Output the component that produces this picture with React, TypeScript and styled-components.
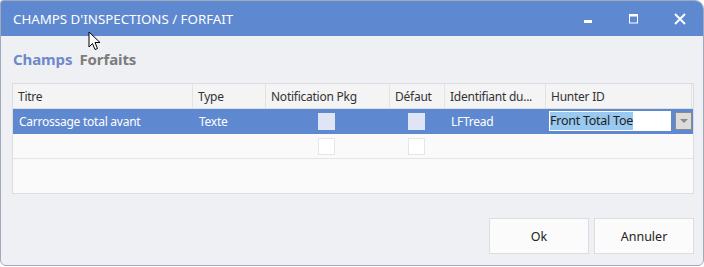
import styled, { createGlobalStyle } from 'styled-components';

const GlobalStyle = createGlobalStyle`
  body {
    margin: 0;
    background: #ffffff;
    font-family: 'Noto Sans', 'Open Sans', sans-serif;
  }
`;

const Window = styled.div`
  position: relative;
  box-sizing: border-box;
  width: 704px;
  height: 266px;
  display: flex;
  flex-direction: column;
  background: #eff0f4;
  border: 1px solid #9fabba;
  border-radius: 3px 9px 6px 6px;
  overflow: hidden;
`;

const TitleBar = styled.div`
  height: 35px;
  display: flex;
  align-items: center;
  justify-content: space-between;
  background: #5e88cf;
  color: #ffffff;
  padding-left: 12px;
`;

const Title = styled.div`
  font-size: 13.3px;
`;

const Controls = styled.div`
  display: flex;
  height: 100%;
`;

const ControlButton = styled.div`
  width: 46px;
  height: 100%;
  display: flex;
  align-items: center;
  justify-content: center;
`;

const Body = styled.div`
  flex: 1;
  display: flex;
  flex-direction: column;
  padding: 10px 9px 10px 11px;
`;

const Tabs = styled.div`
  display: flex;
  gap: 7px;
  height: 26px;
  align-items: center;
  margin-left: 1px;
`;

const Tab = styled.div<{ $active?: boolean }>`
  font-size: 15px;
  font-weight: 700;
  color: ${(p) => (p.$active ? '#6d89c9' : '#7c7c7c')};
  letter-spacing: -0.1px;
`;

const Table = styled.div`
  margin-top: 11px;
  box-sizing: border-box;
  width: 682px;
  height: 111px;
  border: 1px solid #dcdde0;
  background: #fafafa;
  font-size: 12px;
  letter-spacing: -0.25px;
`;

const cols = '180px 73px 124px 55px 101px 146px';

const HeaderRow = styled.div`
  display: grid;
  grid-template-columns: ${cols};
  height: 24px;
  background: #f4f4f4;
  border-bottom: 1px solid #dedfe1;
  color: #333333;
`;

const HeaderCell = styled.div`
  display: flex;
  align-items: center;
  padding-left: 5px;
  border-right: 1px solid #e2e3e5;
  white-space: nowrap;
  overflow: hidden;
`;

const Row = styled.div<{ $selected?: boolean }>`
  display: grid;
  grid-template-columns: ${cols};
  height: 24px;
  background: ${(p) => (p.$selected ? '#5e88cf' : '#fafafa')};
  color: ${(p) => (p.$selected ? '#ffffff' : '#333333')};
  border-bottom: 1px solid ${(p) => (p.$selected ? '#5e88cf' : '#e4e5e7')};
`;

const Cell = styled.div<{ $center?: boolean }>`
  display: flex;
  align-items: center;
  justify-content: ${(p) => (p.$center ? 'center' : 'flex-start')};
  padding-left: ${(p) => (p.$center ? '0' : '6px')};
  padding-right: ${(p) => (p.$center ? '3px' : '0')};
  white-space: nowrap;
`;

const CheckBox = styled.div<{ $selected?: boolean }>`
  box-sizing: border-box;
  width: 17px;
  height: 17px;
  background: ${(p) => (p.$selected ? '#dfe5f4' : '#ffffff')};
  border: 1px solid ${(p) => (p.$selected ? '#dfe5f4' : '#e6e6e6')};
`;

const ComboCell = styled.div`
  display: flex;
  align-items: center;
  gap: 4px;
  padding-left: 3px;
`;

const ComboInput = styled.div`
  width: 122px;
  height: 20px;
  background: #ffffff;
  display: flex;
  align-items: center;
  padding-left: 1px;
  color: #1e1e1e;
  font-size: 12.5px;
`;

const Highlight = styled.span`
  background: #99c9ef;
  line-height: 18px;
`;

const ComboButton = styled.div`
  box-sizing: border-box;
  width: 17px;
  height: 18px;
  background: #dcdcdc;
  border: 1px solid #8a8a8a;
  display: flex;
  align-items: center;
  justify-content: center;
`;

const Footer = styled.div`
  margin-top: auto;
  display: flex;
  justify-content: flex-end;
  gap: 5px;
  margin-bottom: 1px;
`;

const Button = styled.div`
  box-sizing: border-box;
  width: 100px;
  height: 36px;
  background: #fbfbfb;
  border: 1px solid #dcdde0;
  display: flex;
  align-items: center;
  justify-content: center;
  font-size: 12.5px;
  color: #222222;
`;

const Cursor = styled.svg`
  position: absolute;
  left: 87px;
  top: 30px;
`;

export default function App() {
  return (
    <>
      <GlobalStyle />
      <Window>
        <TitleBar>
          <Title>CHAMPS D'INSPECTIONS / FORFAIT</Title>
          <Controls>
            <ControlButton>
              <svg width="10" height="10" viewBox="0 0 10 10">
                <rect x="1" y="6" width="8" height="3" fill="#fff" />
              </svg>
            </ControlButton>
            <ControlButton>
              <svg width="10" height="10" viewBox="0 0 10 10">
                <rect x="0.5" y="0.5" width="8" height="8.5" fill="none" stroke="#fff" strokeWidth="1" />
                <rect x="0" y="0" width="9" height="2.5" fill="#fff" />
              </svg>
            </ControlButton>
            <ControlButton>
              <svg width="12" height="12" viewBox="0 0 12 12">
                <path d="M1 1 L11 11 M11 1 L1 11" stroke="#fff" strokeWidth="2" />
              </svg>
            </ControlButton>
          </Controls>
        </TitleBar>
        <Body>
          <Tabs>
            <Tab $active>Champs</Tab>
            <Tab>Forfaits</Tab>
          </Tabs>
          <Table>
            <HeaderRow>
              <HeaderCell>Titre</HeaderCell>
              <HeaderCell>Type</HeaderCell>
              <HeaderCell>Notification Pkg</HeaderCell>
              <HeaderCell>Défaut</HeaderCell>
              <HeaderCell>Identifiant du...</HeaderCell>
              <HeaderCell>Hunter ID</HeaderCell>
            </HeaderRow>
            <Row $selected>
              <Cell>Carrossage total avant</Cell>
              <Cell>Texte</Cell>
              <Cell $center>
                <CheckBox $selected />
              </Cell>
              <Cell $center>
                <CheckBox $selected />
              </Cell>
              <Cell>LFTread</Cell>
              <ComboCell>
                <ComboInput>
                  <Highlight>Front Total Toe</Highlight>
                </ComboInput>
                <ComboButton>
                  <svg width="8" height="5" viewBox="0 0 8 5">
                    <path d="M0 0 L8 0 L4 4 Z" fill="#8a8a8a" />
                  </svg>
                </ComboButton>
              </ComboCell>
            </Row>
            <Row>
              <Cell />
              <Cell />
              <Cell $center>
                <CheckBox />
              </Cell>
              <Cell $center>
                <CheckBox />
              </Cell>
              <Cell />
              <Cell />
            </Row>
          </Table>
          <Footer>
            <Button>Ok</Button>
            <Button>Annuler</Button>
          </Footer>
        </Body>
        <Cursor width="13" height="20" viewBox="0 0 13 20">
          <path d="M1 1 L1 16 L4.5 12.5 L7 18.5 L9.5 17.5 L7 11.5 L12 11.5 Z" fill="#fff" stroke="#000" strokeWidth="1" strokeLinejoin="round" />
        </Cursor>
      </Window>
    </>
  );
}
